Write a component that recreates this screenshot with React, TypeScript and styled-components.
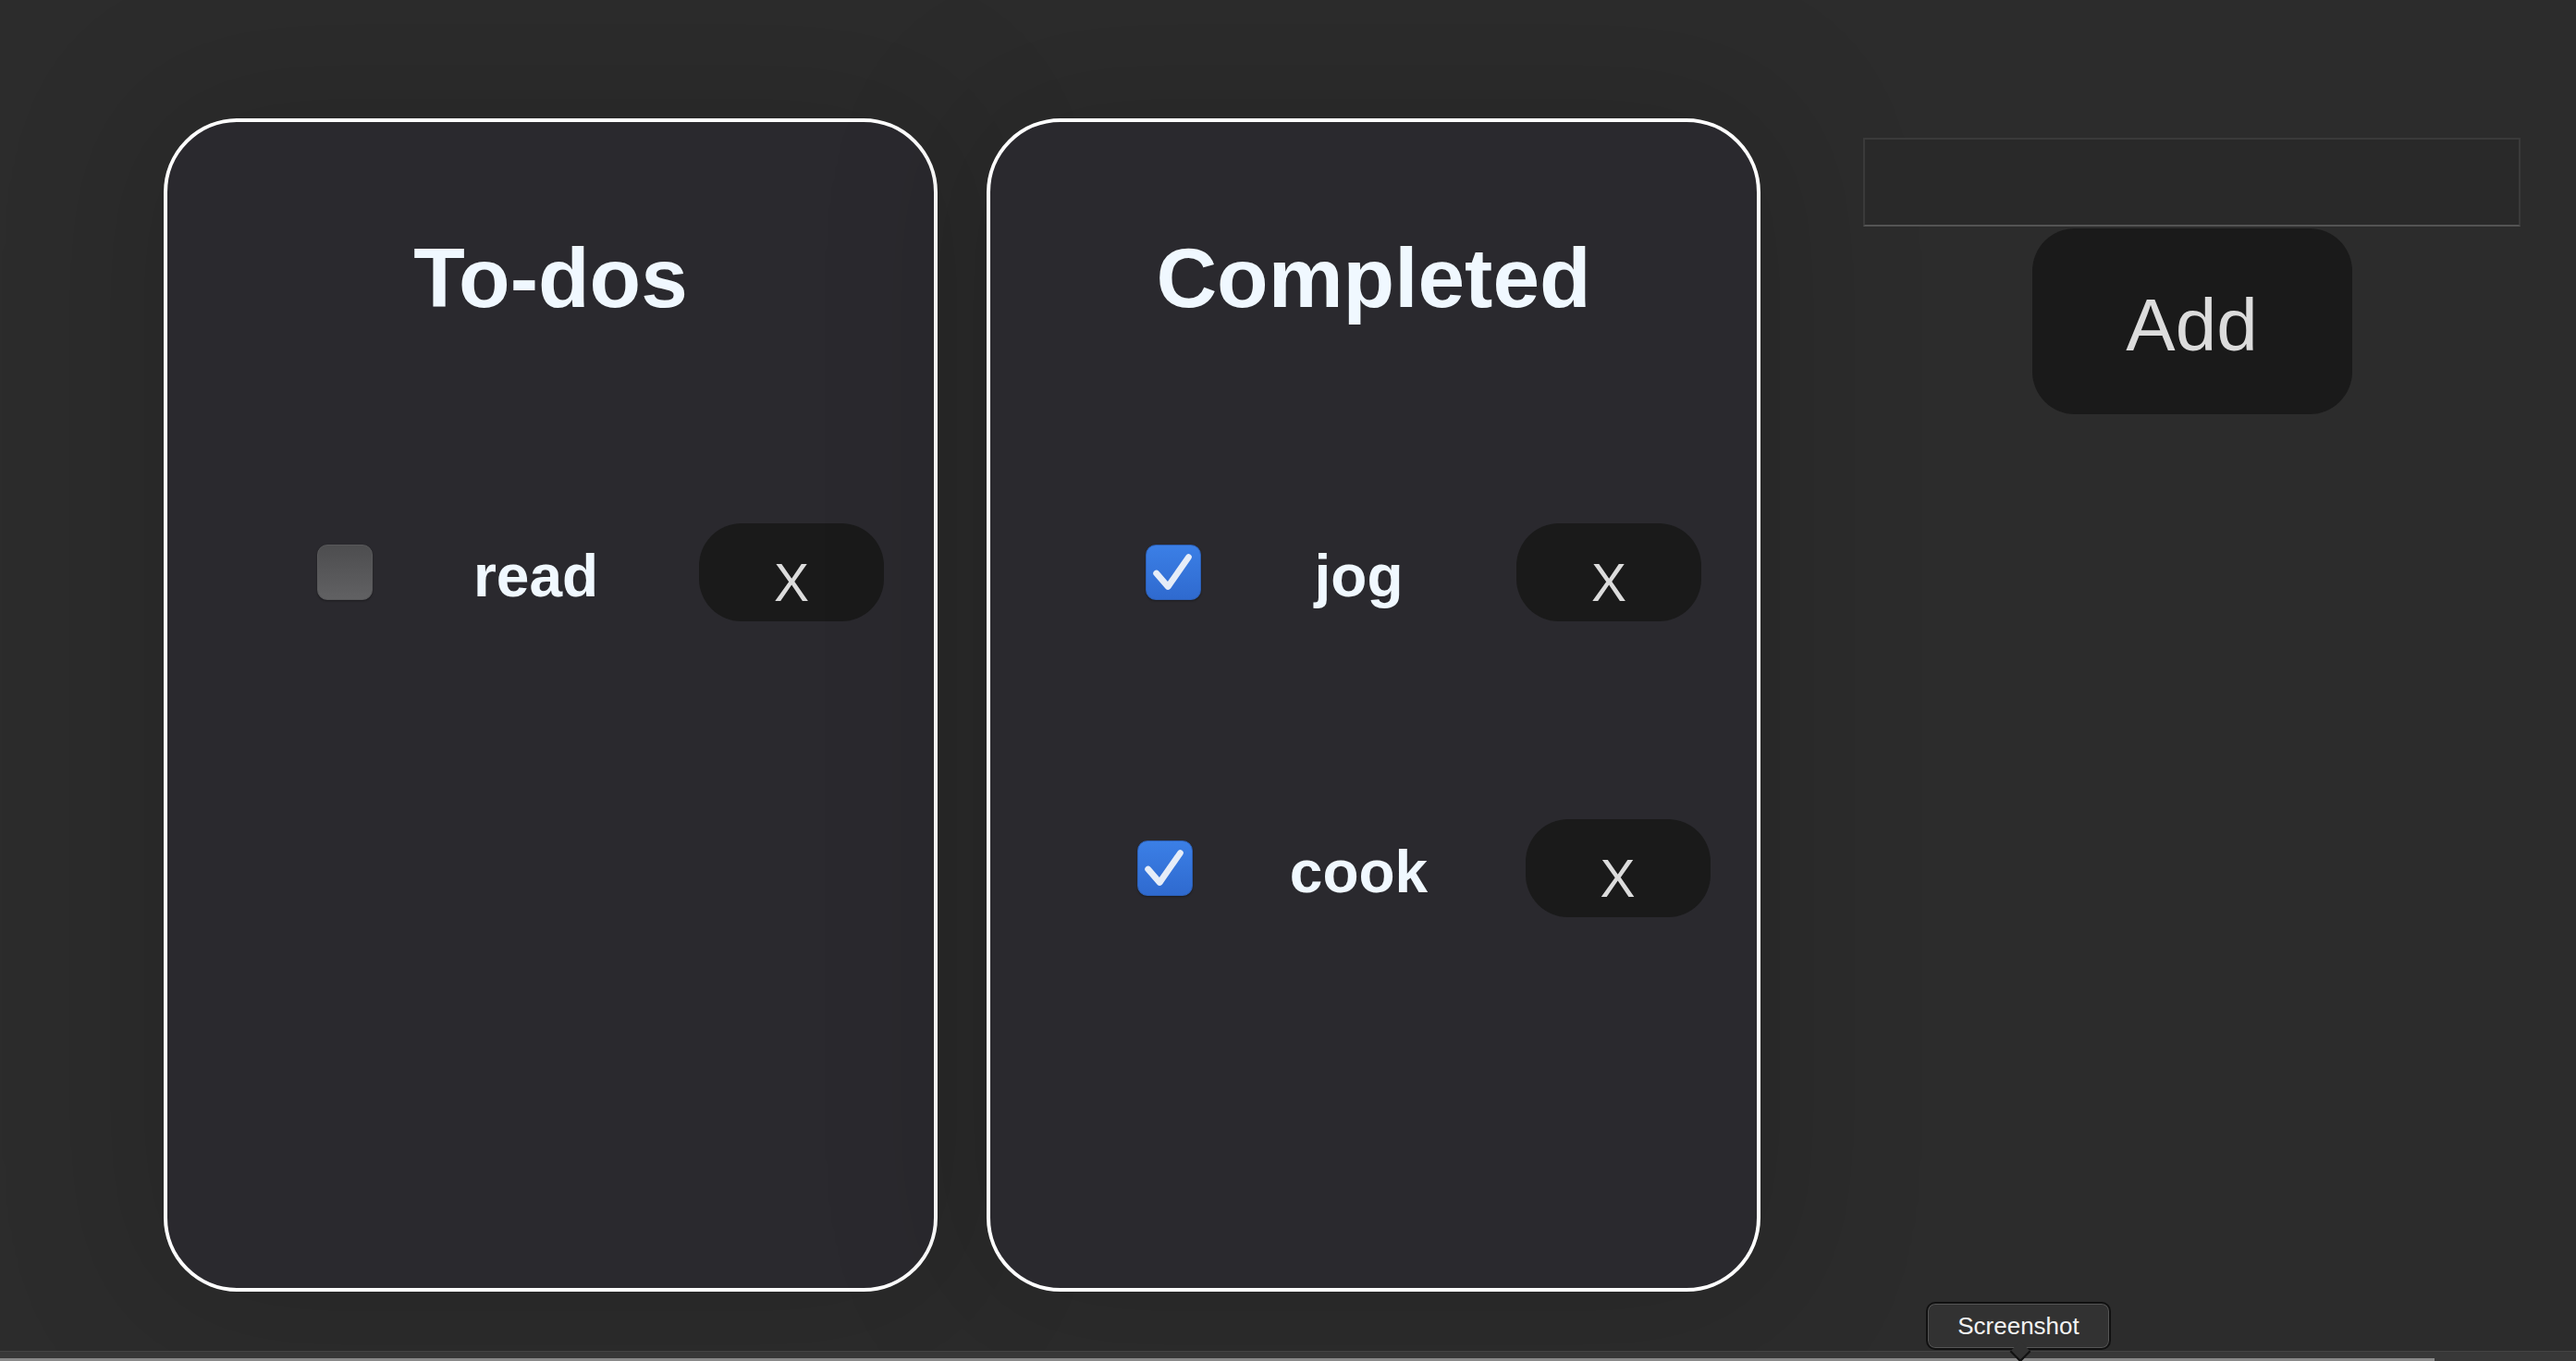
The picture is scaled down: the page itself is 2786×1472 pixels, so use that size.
import React from "react";
import styled, { createGlobalStyle } from "styled-components";

const GlobalStyle = createGlobalStyle`
  html, body {
    margin: 0;
    padding: 0;
    background: #2c2c2c;
  }
  body {
    font-family: "Liberation Sans", Arial, Helvetica, sans-serif;
    overflow: hidden;
  }
`;

// Layout
const Page = styled.div`
  position: relative;
  min-height: 100vh;
  display: flex;
  align-items: flex-start;
  padding: 128px 0 0 177px;
  box-sizing: border-box;
`;

const Boards = styled.div`
  display: flex;
  gap: 53px;
`;

const Card = styled.section`
  width: 837px;
  height: 1269px;
  box-sizing: border-box;
  border: 4px solid #ffffff;
  border-radius: 80px;
  background: #2a292e;
  box-shadow: 0 0 160px 30px rgba(0, 0, 0, 0.13);
  display: flex;
  flex-direction: column;
  align-items: center;
`;

const Title = styled.h1`
  margin: 117px 0 213px;
  font-size: 91px;
  font-weight: 700;
  line-height: normal;
  color: aliceblue;
`;

const List = styled.ul`
  list-style: none;
  margin: 0;
  padding: 0 0 0 108px;
  display: flex;
  flex-direction: column;
  gap: 214px;
`;

const Row = styled.li`
  display: flex;
  align-items: center;
  justify-content: center;
  height: 106px;
`;

const Box = styled.span<{ $checked?: boolean }>`
  width: 60px;
  height: 60px;
  flex: none;
  box-sizing: border-box;
  border-radius: 11px;
  display: flex;
  align-items: center;
  justify-content: center;
  background: ${(p) =>
    p.$checked
      ? "linear-gradient(#3b7fe6, #2f6acf)"
      : "linear-gradient(#4d4d4f, #616163)"};
  border: 1px solid ${(p) => (p.$checked ? "#2c5fb5" : "#58585a")};
  box-shadow: 0 1px 2px rgba(0, 0, 0, 0.35);
`;

const Label = styled.span<{ $width: number }>`
  width: ${(p) => p.$width}px;
  text-align: center;
  padding-top: 8px;
  font-size: 64px;
  font-weight: 700;
  color: aliceblue;
`;

const DeleteButton = styled.button`
  width: 200px;
  height: 106px;
  flex: none;
  border: none;
  border-radius: 46px;
  background: #1a1a1a;
  color: #dcdcdc;
  font-family: "Liberation Sans", Arial, sans-serif;
  font-size: 57px;
  padding: 21px 0 0;
  cursor: pointer;
`;

const Side = styled.div`
  margin: 21px 0 0 111px;
  width: 711px;
  display: flex;
  flex-direction: column;
  align-items: center;
  gap: 2px;
`;

const Input = styled.input`
  width: 100%;
  height: 96px;
  box-sizing: border-box;
  background: #292929;
  border: 2px solid #3a3a3a;
  border-bottom-color: #545454;
  color: #dcdcdc;
  font-size: 40px;
  outline: none;
`;

const AddButton = styled.button`
  width: 346px;
  height: 201px;
  border: none;
  border-radius: 46px;
  background: #1a1a1a;
  color: #dcdcdc;
  font-family: "Liberation Sans", Arial, sans-serif;
  font-size: 80px;
  padding: 8px 0 0;
  cursor: pointer;
`;

// OS overlay at the bottom of the capture
const Dock = styled.div`
  position: absolute;
  left: 0;
  right: 0;
  bottom: 0;
  height: 10px;
  background: #383838;
  border-top: 1px solid #444;
`;

const DockTrack = styled.div`
  position: absolute;
  left: 0;
  bottom: 0;
  width: 2633px;
  height: 3px;
  background: #8a8a8a;
`;

const Tooltip = styled.div`
  position: absolute;
  left: 2083px;
  top: 1408px;
  width: 200px;
  height: 52px;
  box-sizing: border-box;
  border: 2px solid #111;
  box-shadow: inset 0 0 0 1px #555;
  border-radius: 10px;
  background: #323232;
  color: #f2f2f2;
  font-family: "Liberation Sans", Arial, sans-serif;
  font-size: 26px;
  display: flex;
  align-items: center;
  justify-content: center;

  &::after {
    content: "";
    position: absolute;
    left: 92px;
    bottom: -12px;
    width: 14px;
    height: 14px;
    background: #323232;
    border-right: 2px solid #111;
    border-bottom: 2px solid #111;
    transform: rotate(45deg);
  }
`;

const Check = () => (
  <svg width="60" height="60" viewBox="0 0 60 60">
    <path
      d="M11 31 L24 46 L47 13"
      fill="none"
      stroke="#e6edf8"
      strokeWidth="7"
      strokeLinecap="round"
      strokeLinejoin="round"
    />
  </svg>
);

// labelWidth: the text cell grows a little with the word
type Todo = { name: string; done: boolean; labelWidth: number };

const todos: Todo[] = [{ name: "read", done: false, labelWidth: 353 }];
const completed: Todo[] = [
  { name: "jog", done: true, labelWidth: 341 },
  { name: "cook", done: true, labelWidth: 360 },
];

const TodoRow = ({ item }: { item: Todo }) => (
  <Row>
    <Box $checked={item.done}>{item.done && <Check />}</Box>
    <Label $width={item.labelWidth}>{item.name}</Label>
    <DeleteButton>X</DeleteButton>
  </Row>
);

const Board = ({ title, items }: { title: string; items: Todo[] }) => (
  <Card>
    <Title>{title}</Title>
    <List>
      {items.map((t) => (
        <TodoRow key={t.name} item={t} />
      ))}
    </List>
  </Card>
);

export default function App() {
  return (
    <>
      <GlobalStyle />
      <Page>
        <Boards>
          <Board title="To-dos" items={todos} />
          <Board title="Completed" items={completed} />
        </Boards>
        <Side>
          <Input type="text" />
          <AddButton>Add</AddButton>
        </Side>
        <Dock>
          <DockTrack />
        </Dock>
        <Tooltip>Screenshot</Tooltip>
      </Page>
    </>
  );
}
